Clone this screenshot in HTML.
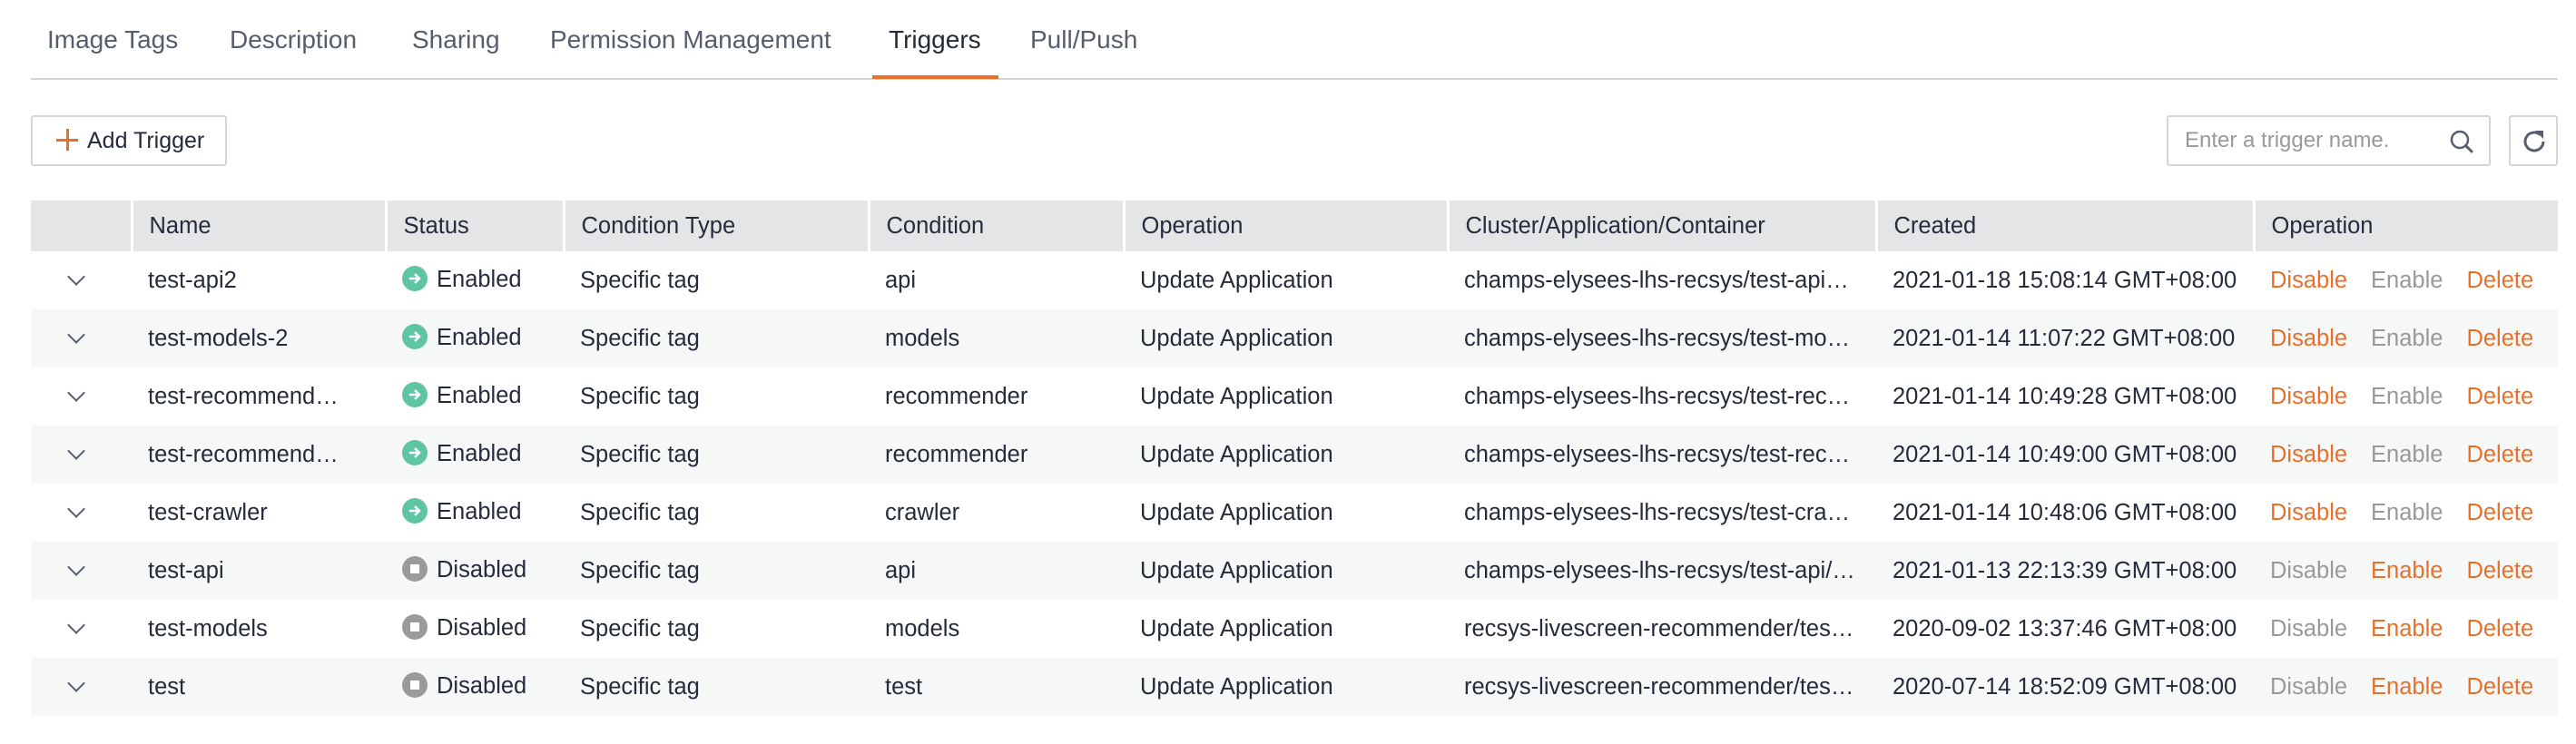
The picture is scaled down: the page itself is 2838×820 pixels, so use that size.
<!DOCTYPE html>
<html><head><meta charset="utf-8"><style>
*{margin:0;padding:0;box-sizing:border-box}
body{width:2838px;height:820px;background:#fff;font-family:"Liberation Sans",Arial,sans-serif;color:#252b3a;position:relative;overflow:hidden}
.tab{position:absolute;top:28px;font-size:28px;color:#575d6c;white-space:nowrap}
.tab.act{color:#252b3a}
.tabline{position:absolute;left:34px;top:86px;width:2784px;height:2px;background:#d4d5d8}
.tabact{position:absolute;left:961px;top:83px;width:139px;height:4px;background:#e8702a}
.btn{position:absolute;left:34px;top:127px;width:216px;height:56px;border:2px solid #d4d5d8;border-radius:3px;font-size:25px;line-height:52px;padding-left:60px;color:#252b3a}
.plus{position:absolute;left:26px;top:13px;width:24px;height:24px}
.plus:before{content:"";position:absolute;left:11px;top:0;width:3px;height:24px;background:#e8702a}
.plus:after{content:"";position:absolute;left:0;top:11px;width:24px;height:3px;background:#e8702a}
.search{position:absolute;left:2387px;top:127px;width:357px;height:56px;border:2px solid #d4d5d8;border-radius:3px;font-size:24px;color:#999;line-height:52px;padding-left:18px}
.refresh{position:absolute;left:2764px;top:127px;width:54px;height:56px;border:2px solid #d4d5d8;border-radius:3px}
table{position:absolute;left:34px;top:221px;width:2784px;border-collapse:collapse;table-layout:fixed;font-size:25.5px}
th{background:#e4e5e7;height:56px;text-align:left;font-weight:normal;padding-left:18px;border-left:3px solid #fff;color:#252b3a}
th:first-child{border-left:none}
td{height:64px;padding-left:18px;white-space:nowrap;overflow:hidden;text-overflow:ellipsis}
td.c{padding-right:22px}
td.n{padding-right:45px}
tr.alt td{background:#f6f7f7}
.chev{display:inline-block;width:14px;height:14px;border-right:2px solid #575d6c;border-bottom:2px solid #575d6c;transform:rotate(45deg);margin-left:25px;margin-top:-10px;vertical-align:middle}
.ic{display:inline-block;width:28px;height:28px;border-radius:50%;vertical-align:middle;margin-right:10px;position:relative;top:-3px}
.en{background:#5ec4a3}
.dis{background:#9a9a9a}
.dis:after{content:"";position:absolute;left:9px;top:9px;width:10px;height:10px;background:#fff;border-radius:1px}
.o{color:#e8702a}.g{color:#999}
.op span{margin-right:26px}
.op span:last-child{margin-right:0}
</style></head><body>
<div class="tab" style="left:52px">Image Tags</div>
<div class="tab" style="left:253px">Description</div>
<div class="tab" style="left:454px">Sharing</div>
<div class="tab" style="left:606px">Permission Management</div>
<div class="tab act" style="left:979px">Triggers</div>
<div class="tab" style="left:1135px">Pull/Push</div>
<div class="tabline"></div><div class="tabact"></div>
<div class="btn"><span class="plus"></span>Add Trigger</div>
<div class="search">Enter a trigger name.
<svg style="position:absolute;right:16px;top:13px" width="28" height="28" viewBox="0 0 28 28"><circle cx="12" cy="12" r="9" fill="none" stroke="#575d6c" stroke-width="2.5"/><path d="M18.5 18.5L25 25" stroke="#575d6c" stroke-width="3" stroke-linecap="round"/></svg></div>
<div class="refresh"><svg style="position:absolute;left:11px;top:12px" width="30" height="30" viewBox="0 0 30 30"><path d="M25 15A10 10 0 1 1 21.5 7.4" fill="none" stroke="#575d6c" stroke-width="3"/><path d="M16 3L25 3L25 12Z" fill="#575d6c"/></svg></div>
<table>
<colgroup><col style="width:111px"><col style="width:280px"><col style="width:196px"><col style="width:336px"><col style="width:281px"><col style="width:357px"><col style="width:472px"><col style="width:416px"><col style="width:335px"></colgroup>
<tr><th></th><th>Name</th><th>Status</th><th>Condition Type</th><th>Condition</th><th>Operation</th><th>Cluster/Application/Container</th><th>Created</th><th>Operation</th></tr>
<tr><td><span class="chev"></span></td><td class="n">test-api2</td><td><span class="ic en"><svg width="28" height="28" viewBox="0 0 28 28"><path d="M8 14H19M14 9L19 14L14 19" fill="none" stroke="#fff" stroke-width="2.5"/></svg></span>Enabled</td><td>Specific tag</td><td>api</td><td>Update Application</td><td class="c">champs-elysees-lhs-recsys/test-api2/test-api2</td><td>2021-01-18 15:08:14 GMT+08:00</td><td class="op"><span class="o">Disable</span><span class="g">Enable</span><span class="o">Delete</span></td></tr>
<tr class="alt"><td><span class="chev"></span></td><td class="n">test-models-2</td><td><span class="ic en"><svg width="28" height="28" viewBox="0 0 28 28"><path d="M8 14H19M14 9L19 14L14 19" fill="none" stroke="#fff" stroke-width="2.5"/></svg></span>Enabled</td><td>Specific tag</td><td>models</td><td>Update Application</td><td class="c">champs-elysees-lhs-recsys/test-models-2/container</td><td>2021-01-14 11:07:22 GMT+08:00</td><td class="op"><span class="o">Disable</span><span class="g">Enable</span><span class="o">Delete</span></td></tr>
<tr><td><span class="chev"></span></td><td class="n">test-recommender-1</td><td><span class="ic en"><svg width="28" height="28" viewBox="0 0 28 28"><path d="M8 14H19M14 9L19 14L14 19" fill="none" stroke="#fff" stroke-width="2.5"/></svg></span>Enabled</td><td>Specific tag</td><td>recommender</td><td>Update Application</td><td class="c">champs-elysees-lhs-recsys/test-recommender/container</td><td>2021-01-14 10:49:28 GMT+08:00</td><td class="op"><span class="o">Disable</span><span class="g">Enable</span><span class="o">Delete</span></td></tr>
<tr class="alt"><td><span class="chev"></span></td><td class="n">test-recommender-2</td><td><span class="ic en"><svg width="28" height="28" viewBox="0 0 28 28"><path d="M8 14H19M14 9L19 14L14 19" fill="none" stroke="#fff" stroke-width="2.5"/></svg></span>Enabled</td><td>Specific tag</td><td>recommender</td><td>Update Application</td><td class="c">champs-elysees-lhs-recsys/test-recommender/container</td><td>2021-01-14 10:49:00 GMT+08:00</td><td class="op"><span class="o">Disable</span><span class="g">Enable</span><span class="o">Delete</span></td></tr>
<tr><td><span class="chev"></span></td><td class="n">test-crawler</td><td><span class="ic en"><svg width="28" height="28" viewBox="0 0 28 28"><path d="M8 14H19M14 9L19 14L14 19" fill="none" stroke="#fff" stroke-width="2.5"/></svg></span>Enabled</td><td>Specific tag</td><td>crawler</td><td>Update Application</td><td class="c">champs-elysees-lhs-recsys/test-crawler/container</td><td>2021-01-14 10:48:06 GMT+08:00</td><td class="op"><span class="o">Disable</span><span class="g">Enable</span><span class="o">Delete</span></td></tr>
<tr class="alt"><td><span class="chev"></span></td><td class="n">test-api</td><td><span class="ic dis"></span>Disabled</td><td>Specific tag</td><td>api</td><td>Update Application</td><td class="c">champs-elysees-lhs-recsys/test-api/test-api</td><td>2021-01-13 22:13:39 GMT+08:00</td><td class="op"><span class="g">Disable</span><span class="o">Enable</span><span class="o">Delete</span></td></tr>
<tr><td><span class="chev"></span></td><td class="n">test-models</td><td><span class="ic dis"></span>Disabled</td><td>Specific tag</td><td>models</td><td>Update Application</td><td class="c">recsys-livescreen-recommender/test-models</td><td>2020-09-02 13:37:46 GMT+08:00</td><td class="op"><span class="g">Disable</span><span class="o">Enable</span><span class="o">Delete</span></td></tr>
<tr class="alt"><td><span class="chev"></span></td><td class="n">test</td><td><span class="ic dis"></span>Disabled</td><td>Specific tag</td><td>test</td><td>Update Application</td><td class="c">recsys-livescreen-recommender/test/container</td><td>2020-07-14 18:52:09 GMT+08:00</td><td class="op"><span class="g">Disable</span><span class="o">Enable</span><span class="o">Delete</span></td></tr>
</table>
</body></html>
